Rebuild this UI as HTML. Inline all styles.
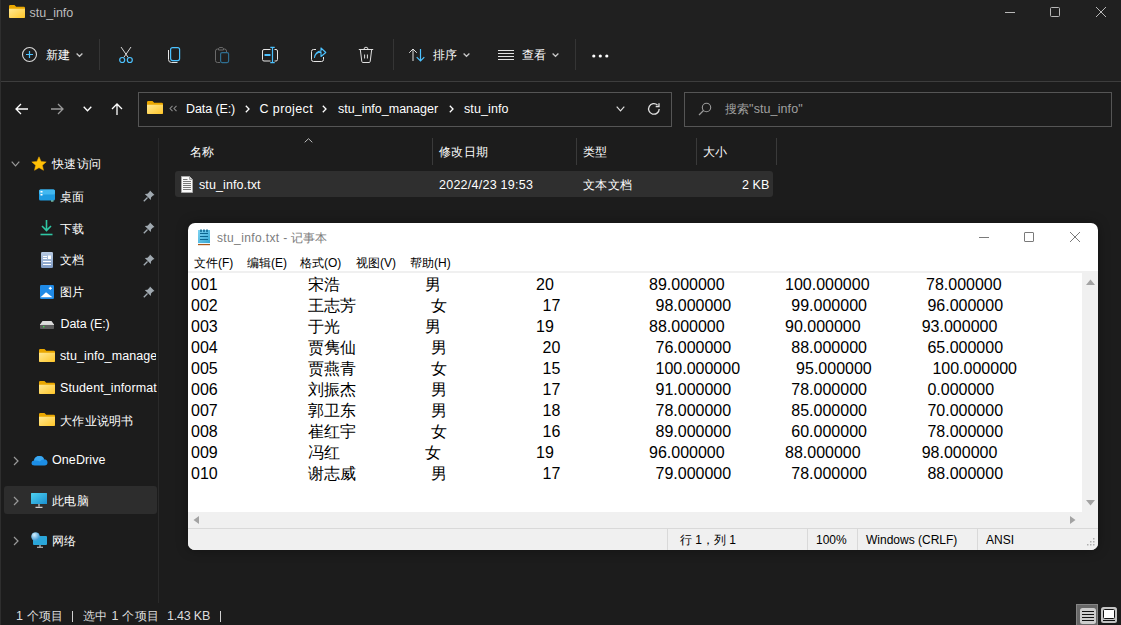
<!DOCTYPE html>
<html><head><meta charset="utf-8">
<style>
*{margin:0;padding:0;box-sizing:border-box}
html,body{width:1121px;height:625px;overflow:hidden;background:#1c1c1c;font-family:"Liberation Sans",sans-serif;color:#fff}
.a{position:absolute;white-space:nowrap}
svg{position:absolute;overflow:visible}
#top{position:absolute;left:0;top:0;width:1121px;height:81px;background:#202020}
#hline{position:absolute;left:0;top:81px;width:1121px;height:1px;background:#3d3d3d}
#lborder{position:absolute;left:0;top:0;width:1px;height:625px;background:#3a3a3a}
.t13{font-size:12.5px;line-height:16px;letter-spacing:0.1px}
.t14{font-size:12.5px;line-height:16px}
.cj{font-size:12px;line-height:16px;letter-spacing:0.3px}
#lb{position:absolute;left:0;top:0;width:1px;height:625px;background:#2e2e2e;z-index:5}
.vsep{position:absolute;width:1px;background:#3a3a3a}
.np{position:absolute;left:188px;top:223px;width:910px;height:327px;background:#fff;border-radius:7px;overflow:hidden;box-shadow:0 0 12px rgba(0,0,0,.35)}
.np .a{color:#000}
.tx{font-size:16px;line-height:21px}
.mn{font-size:12px;line-height:16px;color:#676767}
.st{font-size:12px;line-height:16px;color:#1a1a1a}
</style></head><body>
<div id="lb"></div>
<div id="top"></div>
<div id="hline"></div>

<!-- title -->
<svg style="left:9px;top:5px" width="16" height="13" viewBox="0 0 16 13"><defs><linearGradient id="fg" x1="0" y1="0" x2="1" y2="1"><stop offset="0" stop-color="#ffe892"/><stop offset="1" stop-color="#ffc629"/></linearGradient></defs><path d="M0 1.2Q0 0 1.2 0H5.5L7.2 1.8H14.8Q16 1.8 16 3V11.8Q16 13 14.8 13H1.2Q0 13 0 11.8Z" fill="#eaa700"/><path d="M0 3.8H16V11.8Q16 13 14.8 13H1.2Q0 13 0 11.8Z" fill="url(#fg)"/></svg>
<div class="a" style="left:29.5px;top:5px;font-size:12.5px;line-height:16px;color:#bdbdbd">stu_info</div>
<!-- window controls -->
<div class="a" style="left:1005px;top:12px;width:10px;height:1px;background:#b8b8b8"></div>
<div class="a" style="left:1050px;top:7px;width:10px;height:10px;border:1px solid #b8b8b8;border-radius:1.5px"></div>
<svg style="left:1096px;top:7px" width="10" height="10" viewBox="0 0 10 10"><path d="M0 0L10 10M10 0L0 10" stroke="#b8b8b8" stroke-width="1"/></svg>


<!-- toolbar -->
<svg style="left:22px;top:47px" width="16" height="16" viewBox="0 0 16 16"><circle cx="7.5" cy="7.5" r="7" fill="none" stroke="#d8d8d8" stroke-width="1.1"/><path d="M7.5 4V11M4 7.5H11" stroke="#4cc2ff" stroke-width="1.2"/></svg>
<div class="a cj" style="left:46px;top:47px;font-weight:500">新建</div>
<svg style="left:76px;top:53px" width="7" height="4" viewBox="0 0 7 4"><path d="M0.6 0.6L3.5 3.3L6.4 0.6" fill="none" stroke="#c8c8c8" stroke-width="1.3"/></svg>
<div class="vsep" style="left:99px;top:39px;height:31px;background:#353535"></div>
<!-- cut -->
<svg style="left:118px;top:46px" width="16" height="18" viewBox="0 0 16 18"><path d="M3 1L10.3 11.6M13 1L5.7 11.6" stroke="#d8d8d8" stroke-width="1"/><circle cx="4.2" cy="14" r="2.5" fill="none" stroke="#4cc2ff" stroke-width="1.2"/><circle cx="11.8" cy="14" r="2.5" fill="none" stroke="#4cc2ff" stroke-width="1.2"/></svg>
<!-- copy -->
<svg style="left:167px;top:46px" width="14" height="18" viewBox="0 0 14 18"><rect x="3.6" y="1.6" width="9" height="13" rx="2" fill="none" stroke="#4cc2ff" stroke-width="1.2"/><path d="M1.5 4V13.5Q1.5 16.5 4.5 16.5H10.5" fill="none" stroke="#e6e6e6" stroke-width="1"/></svg>
<!-- paste disabled -->
<svg style="left:214px;top:46px" width="16" height="18" viewBox="0 0 16 18"><path d="M6 16.5H3.5Q1.5 16.5 1.5 14.5V5Q1.5 3 3.5 3H4.5M9.5 3H10.5Q12.5 3 12.5 5V6" fill="none" stroke="#6a6a6a" stroke-width="1"/><path d="M4.5 4V2.5Q4.5 1.5 7 1.5Q9.5 1.5 9.5 2.5V4Z" fill="none" stroke="#6a6a6a" stroke-width="1"/><rect x="6.6" y="6.6" width="8" height="10" rx="1.5" fill="none" stroke="#2f6f92" stroke-width="1.2"/></svg>
<!-- rename -->
<svg style="left:261px;top:46px" width="18" height="18" viewBox="0 0 18 18"><path d="M9.5 3.5H3Q1.5 3.5 1.5 5V13.5Q1.5 15 3 15H9.5M13.5 3.5H15Q16.5 3.5 16.5 5V13.5Q16.5 15 15 15H13.5" fill="none" stroke="#e6e6e6" stroke-width="1"/><path d="M3.5 9H9.5" stroke="#4cc2ff" stroke-width="2"/><path d="M11.5 1.5V16.5M9.3 1.3H13.7M9.3 16.7H13.7" stroke="#4cc2ff" stroke-width="1.2"/></svg>
<!-- share -->
<svg style="left:310px;top:46px" width="17" height="18" viewBox="0 0 17 18"><path d="M6 3.5H3.5Q1.5 3.5 1.5 5.5V13.5Q1.5 15.5 3.5 15.5H11.5Q13.5 15.5 13.5 13.5V11" fill="none" stroke="#e6e6e6" stroke-width="1"/><path d="M4.5 11.5Q5.2 6.5 11 6.3V10.5L15.8 6.5L11 2V5Q5.5 5.3 4.5 11.5Z" fill="none" stroke="#4cc2ff" stroke-width="1.1" stroke-linejoin="round"/></svg>
<!-- delete -->
<svg style="left:358px;top:46px" width="16" height="18" viewBox="0 0 16 18"><path d="M0.8 3.5H15.2M6 3.3Q6 1.2 8 1.2Q10 1.2 10 3.3M2.3 3.5L3.8 15.5Q4 16.5 5 16.5H11Q12 16.5 12.2 15.5L13.7 3.5M6.6 8.5V12.5M9.4 8.5V12.5" fill="none" stroke="#e0e0e0" stroke-width="1"/></svg>
<div class="vsep" style="left:393px;top:39px;height:31px;background:#353535"></div>
<!-- sort -->
<svg style="left:408px;top:48px" width="18" height="14" viewBox="0 0 18 14"><path d="M5 13V1M1.2 4.8L5 1L8.8 4.8" fill="none" stroke="#e0e0e0" stroke-width="1"/><path d="M12.5 1V13M8.7 9.2L12.5 13L16.3 9.2" fill="none" stroke="#4cc2ff" stroke-width="1.2"/></svg>
<div class="a cj" style="left:433px;top:47px;font-weight:500">排序</div>
<svg style="left:463px;top:53px" width="7" height="4" viewBox="0 0 7 4"><path d="M0.6 0.6L3.5 3.3L6.4 0.6" fill="none" stroke="#c8c8c8" stroke-width="1.3"/></svg>
<!-- view -->
<svg style="left:498px;top:49px" width="16" height="12" viewBox="0 0 16 12"><path d="M0 1.5H16M0 4.5H16M0 7.5H16M0 10.5H16" stroke="#e0e0e0" stroke-width="1"/></svg>
<div class="a cj" style="left:522px;top:47px;font-weight:500">查看</div>
<svg style="left:552px;top:53px" width="7" height="4" viewBox="0 0 7 4"><path d="M0.6 0.6L3.5 3.3L6.4 0.6" fill="none" stroke="#c8c8c8" stroke-width="1.3"/></svg>
<div class="vsep" style="left:575px;top:39px;height:31px;background:#353535"></div>
<svg style="left:592px;top:54px" width="17" height="4" viewBox="0 0 17 4"><circle cx="1.8" cy="2" r="1.6" fill="#fff"/><circle cx="8.3" cy="2" r="1.6" fill="#fff"/><circle cx="14.8" cy="2" r="1.6" fill="#fff"/></svg>
<!-- nav -->
<svg style="left:15px;top:103px" width="14" height="12" viewBox="0 0 14 12"><path d="M13 6H1.2M6 1L1 6L6 11" fill="none" stroke="#fff" stroke-width="1.3"/></svg>
<svg style="left:50px;top:103px" width="14" height="12" viewBox="0 0 14 12"><path d="M1 6H12.8M8 1L13 6L8 11" fill="none" stroke="#9a9a9a" stroke-width="1.3"/></svg>
<svg style="left:83px;top:106px" width="9" height="6" viewBox="0 0 9 6"><path d="M0.7 0.7L4.5 4.8L8.3 0.7" fill="none" stroke="#fff" stroke-width="1.3"/></svg>
<svg style="left:111px;top:103px" width="12" height="12" viewBox="0 0 12 12"><path d="M6 12V1.2M1 6L6 1L11 6" fill="none" stroke="#fff" stroke-width="1.3"/></svg>
<div class="a" style="left:138px;top:92px;width:534px;height:35px;border:1px solid #555;background:#1c1c1c"></div>
<svg style="left:147px;top:101px" width="16" height="13" viewBox="0 0 16 13"><path d="M0 1.2Q0 0 1.2 0H5.5L7.2 1.8H14.8Q16 1.8 16 3V11.8Q16 13 14.8 13H1.2Q0 13 0 11.8Z" fill="#eaa700"/><path d="M0 3.8H16V11.8Q16 13 14.8 13H1.2Q0 13 0 11.8Z" fill="url(#fg)"/></svg>
<svg style="left:169px;top:105px" width="9" height="7" viewBox="0 0 9 7"><path d="M3.5 0.8L1 3.5L3.5 6.2M7.5 0.8L5 3.5L7.5 6.2" fill="none" stroke="#8a8a8a" stroke-width="1.1"/></svg>
<div class="a t14" style="left:186px;top:101px;letter-spacing:-0.1px">Data (E:)</div>
<svg style="left:245px;top:105px" width="5" height="8" viewBox="0 0 5 8"><path d="M0.8 0.8L4 4L0.8 7.2" fill="none" stroke="#fff" stroke-width="1.3"/></svg>
<div class="a t14" style="left:259.5px;top:101px;letter-spacing:0.4px">C project</div>
<svg style="left:322px;top:105px" width="5" height="8" viewBox="0 0 5 8"><path d="M0.8 0.8L4 4L0.8 7.2" fill="none" stroke="#fff" stroke-width="1.3"/></svg>
<div class="a t14" style="left:338px;top:101px;letter-spacing:0px">stu_info_manager</div>
<svg style="left:449px;top:105px" width="5" height="8" viewBox="0 0 5 8"><path d="M0.8 0.8L4 4L0.8 7.2" fill="none" stroke="#fff" stroke-width="1.3"/></svg>
<div class="a t14" style="left:464px;top:101px;letter-spacing:0.1px">stu_info</div>
<svg style="left:616px;top:106px" width="9" height="6" viewBox="0 0 9 6"><path d="M0.7 0.7L4.5 4.8L8.3 0.7" fill="none" stroke="#e0e0e0" stroke-width="1.2"/></svg>
<svg style="left:647px;top:102px" width="14" height="14" viewBox="0 0 14 14"><path d="M12.2 7A5.3 5.3 0 1 1 10.5 3" fill="none" stroke="#e0e0e0" stroke-width="1.3"/><path d="M12 1.2V4.5H8.7" fill="none" stroke="#e0e0e0" stroke-width="1.3"/></svg>
<div class="a" style="left:684px;top:92px;width:428px;height:35px;border:1px solid #555;background:#1c1c1c"></div>
<svg style="left:698px;top:102px" width="14" height="14" viewBox="0 0 14 14"><circle cx="8.5" cy="5.5" r="4.2" fill="none" stroke="#9a9a9a" stroke-width="1.1"/><path d="M5.5 8.5L1 13" stroke="#9a9a9a" stroke-width="1.3"/></svg>
<div class="a t13" style="left:724.5px;top:101px;color:#a0a0a0"><span class="cj">搜索</span>"stu_info"</div>

<!-- left pane -->
<div class="vsep" style="left:158px;top:138px;height:465px;background:#2a2a2a"></div>
<svg style="left:11px;top:161px" width="9" height="6" viewBox="0 0 9 6"><path d="M0.7 0.7L4.5 4.8L8.3 0.7" fill="none" stroke="#9a9a9a" stroke-width="1.2"/></svg>
<svg style="left:31px;top:156px" width="16" height="16" viewBox="0 0 16 16"><path d="M8 0.8L10.1 5.4L15.2 5.9L11.4 9.3L12.5 14.3L8 11.7L3.5 14.3L4.6 9.3L0.8 5.9L5.9 5.4Z" fill="#ffc107" stroke="#f0a800" stroke-width="0.5"/></svg>
<div class="a cj" style="left:52px;top:156px">快速访问</div>
<svg style="left:39px;top:189px" width="16" height="13" viewBox="0 0 16 13"><rect x="0" y="0.5" width="16" height="11" rx="1.5" fill="#1e9be0"/><rect x="0" y="0.5" width="16" height="5" rx="1.5" fill="#42b8f0"/><rect x="1.5" y="2" width="2" height="1.5" fill="#fff"/><rect x="1.5" y="5" width="2" height="1.5" fill="#fff"/><rect x="12" y="11.5" width="2.5" height="1" fill="#9fd"/></svg>
<div class="a cj" style="left:60px;top:189px">桌面</div>
<svg style="left:143px;top:190px" width="12" height="12" viewBox="0 0 12 12"><path d="M7 0.5L11.5 5L10 5.5L8 7.5L7.8 10L1.8 4L4.5 3.8L6.5 1.8Z" fill="#a0a9b0"/><path d="M4.5 7.5L0.8 11.2" stroke="#a0a9b0" stroke-width="1.3"/></svg>
<svg style="left:40px;top:219px" width="13" height="17" viewBox="0 0 13 17"><path d="M6.5 1V11.5M2 7L6.5 11.5L11 7" fill="none" stroke="#2fc7a4" stroke-width="1.6"/><path d="M0.5 15.5H12.5" stroke="#2fc7a4" stroke-width="1.6"/></svg>
<div class="a cj" style="left:60px;top:221px">下载</div>
<svg style="left:143px;top:222px" width="12" height="12" viewBox="0 0 12 12"><path d="M7 0.5L11.5 5L10 5.5L8 7.5L7.8 10L1.8 4L4.5 3.8L6.5 1.8Z" fill="#a0a9b0"/><path d="M4.5 7.5L0.8 11.2" stroke="#a0a9b0" stroke-width="1.3"/></svg>
<svg style="left:41px;top:252px" width="12" height="16" viewBox="0 0 12 16"><defs><linearGradient id="dg" x1="0" y1="0" x2="0" y2="1"><stop offset="0" stop-color="#b9cbe3"/><stop offset="1" stop-color="#7f9bc4"/></linearGradient></defs><rect x="0" y="0" width="12" height="16" rx="1.2" fill="url(#dg)"/><path d="M2 4.5H6M2 6.5H6M2 9.5H10M2 12.5H10" stroke="#fff" stroke-width="1"/><rect x="7" y="3.5" width="3" height="3.5" fill="#fff"/></svg>
<div class="a cj" style="left:60px;top:252px">文档</div>
<svg style="left:143px;top:254px" width="12" height="12" viewBox="0 0 12 12"><path d="M7 0.5L11.5 5L10 5.5L8 7.5L7.8 10L1.8 4L4.5 3.8L6.5 1.8Z" fill="#a0a9b0"/><path d="M4.5 7.5L0.8 11.2" stroke="#a0a9b0" stroke-width="1.3"/></svg>
<svg style="left:40px;top:285px" width="14" height="14" viewBox="0 0 14 14"><rect x="0" y="0" width="14" height="14" rx="1.2" fill="#1f8ae6"/><path d="M0.5 12.3L6 7.3L12.5 12.3Z" fill="#fff"/><path d="M10.3 1.8V4.8M8.8 3.3H11.8" stroke="#fff" stroke-width="1.2"/></svg>
<div class="a cj" style="left:60px;top:284px">图片</div>
<svg style="left:143px;top:286px" width="12" height="12" viewBox="0 0 12 12"><path d="M7 0.5L11.5 5L10 5.5L8 7.5L7.8 10L1.8 4L4.5 3.8L6.5 1.8Z" fill="#a0a9b0"/><path d="M4.5 7.5L0.8 11.2" stroke="#a0a9b0" stroke-width="1.3"/></svg>
<svg style="left:40px;top:321px" width="14" height="8" viewBox="0 0 14 8"><path d="M2.5 0H11.5L14 3.5H0Z" fill="#dcdcdc"/><rect x="0" y="3.5" width="14" height="4.5" rx="0.8" fill="#5d5d5d"/><path d="M0 3.5H14" stroke="#f0f0f0" stroke-width="0.8"/><rect x="3" y="5" width="1.4" height="1.4" fill="#3ee04a"/></svg>
<div class="a t13" style="left:60.5px;top:316px;letter-spacing:-0.1px">Data (E:)</div>
<svg style="left:39px;top:349px" width="16" height="13" viewBox="0 0 16 13"><path d="M0 1.2Q0 0 1.2 0H5.5L7.2 1.8H14.8Q16 1.8 16 3V11.8Q16 13 14.8 13H1.2Q0 13 0 11.8Z" fill="#eaa700"/><path d="M0 3.8H16V11.8Q16 13 14.8 13H1.2Q0 13 0 11.8Z" fill="url(#fg)"/></svg><div class="a t13" style="left:60px;top:348px;width:96px;overflow:hidden">stu_info_manager</div>
<svg style="left:39px;top:381px" width="16" height="13" viewBox="0 0 16 13"><path d="M0 1.2Q0 0 1.2 0H5.5L7.2 1.8H14.8Q16 1.8 16 3V11.8Q16 13 14.8 13H1.2Q0 13 0 11.8Z" fill="#eaa700"/><path d="M0 3.8H16V11.8Q16 13 14.8 13H1.2Q0 13 0 11.8Z" fill="url(#fg)"/></svg><div class="a t13" style="left:60px;top:380px;width:97px;overflow:hidden">Student_information</div>
<svg style="left:39px;top:413px" width="16" height="13" viewBox="0 0 16 13"><path d="M0 1.2Q0 0 1.2 0H5.5L7.2 1.8H14.8Q16 1.8 16 3V11.8Q16 13 14.8 13H1.2Q0 13 0 11.8Z" fill="#eaa700"/><path d="M0 3.8H16V11.8Q16 13 14.8 13H1.2Q0 13 0 11.8Z" fill="url(#fg)"/></svg><div class="a cj" style="left:60px;top:413px">大作业说明书</div>
<svg style="left:13px;top:456px" width="6" height="10" viewBox="0 0 6 10"><path d="M1 1L5 5L1 9" fill="none" stroke="#9a9a9a" stroke-width="1.2"/></svg>
<svg style="left:31px;top:455px" width="17" height="11" viewBox="0 0 17 11"><path d="M3.5 10.5Q0.5 10.5 0.5 8Q0.5 5.7 3 5.5Q3.8 1 8.5 1Q12 1 13 4.2Q16.5 4.5 16.5 7.5Q16.5 10.5 13.5 10.5Z" fill="#1c8ee6"/><path d="M3 5.5Q3.8 1 8.5 1Q12 1 13 4.2Q10 4.5 9 6.5Q6 5 3 5.5Z" fill="#3aa8f2"/></svg>
<div class="a t13" style="left:52px;top:452px">OneDrive</div>
<div class="a" style="left:4px;top:486px;width:153px;height:28px;background:#2d2d2d;border-radius:3px"></div>
<svg style="left:13px;top:496px" width="6" height="10" viewBox="0 0 6 10"><path d="M1 1L5 5L1 9" fill="none" stroke="#9a9a9a" stroke-width="1.2"/></svg>
<svg style="left:31px;top:493px" width="16" height="15" viewBox="0 0 16 15"><rect x="0" y="0" width="16" height="11" rx="1" fill="#2bb7e4"/><rect x="0" y="0" width="16" height="11" rx="1" fill="url(#pg)"/><defs><linearGradient id="pg" x1="0" y1="0" x2="1" y2="1"><stop offset="0" stop-color="#4fd2f0"/><stop offset="1" stop-color="#1a8fd0"/></linearGradient></defs><path d="M8 11V13.5M4.5 14.3H11.5" stroke="#cfcfcf" stroke-width="1.2"/></svg>
<div class="a cj" style="left:52px;top:493px">此电脑</div>
<svg style="left:13px;top:536px" width="6" height="10" viewBox="0 0 6 10"><path d="M1 1L5 5L1 9" fill="none" stroke="#9a9a9a" stroke-width="1.2"/></svg>
<svg style="left:31px;top:532px" width="16" height="16" viewBox="0 0 16 16"><rect x="2" y="4" width="14" height="9" rx="1" fill="#2aa6d9"/><path d="M9 13V15M6 15.3H12" stroke="#cfcfcf" stroke-width="1.1"/><circle cx="4.5" cy="4.5" r="4" fill="#5dbbe8"/><circle cx="4.5" cy="4.5" r="4" fill="url(#gg)"/><defs><radialGradient id="gg" cx="0.35" cy="0.3" r="0.8"><stop offset="0" stop-color="#d6f1ff"/><stop offset="1" stop-color="#2b8fd0"/></radialGradient></defs></svg>
<div class="a cj" style="left:52px;top:533px">网络</div>

<!-- content header -->
<svg style="left:304px;top:138px" width="9" height="5" viewBox="0 0 9 5"><path d="M0.7 4.3L4.5 0.7L8.3 4.3" fill="none" stroke="#bdbdbd" stroke-width="1"/></svg>
<div class="a cj" style="left:190px;top:144px">名称</div>
<div class="vsep" style="left:432px;top:138px;height:27px;background:#3a3a3a"></div>
<div class="a cj" style="left:439px;top:144px">修改日期</div>
<div class="vsep" style="left:576px;top:138px;height:27px;background:#3a3a3a"></div>
<div class="a cj" style="left:583px;top:144px">类型</div>
<div class="vsep" style="left:696px;top:138px;height:27px;background:#3a3a3a"></div>
<div class="a cj" style="left:703px;top:144px">大小</div>
<div class="vsep" style="left:776px;top:138px;height:27px;background:#3a3a3a"></div>
<div class="a" style="left:175px;top:171px;width:598px;height:26px;background:#2f2f2f;border-radius:3px"></div>
<svg style="left:181px;top:176px" width="12" height="17" viewBox="0 0 12 17"><path d="M0.5 0.5H8.3L11.5 3.7V16.5H0.5Z" fill="#fafafa" stroke="#a8a8a8" stroke-width="1"/><path d="M8.5 0.5V3.5H11.5" fill="#d8d8d8" stroke="#a8a8a8" stroke-width="1"/><path d="M2 3.5H6.5M2 5.5H10M2 7.5H10M2 9.5H10M2 11.5H10M2 13.5H10" stroke="#7a7a7a" stroke-width="1"/></svg>
<div class="a t13" style="left:199px;top:177px">stu_info.txt</div>
<div class="a t13" style="left:439px;top:177px;letter-spacing:0.25px">2022/4/23 19:53</div>
<div class="a cj" style="left:583px;top:177px">文本文档</div>
<div class="a t13" style="left:742px;top:177px">2 KB</div>
<!-- status -->
<div class="a t13" style="left:16px;top:608px;color:#dcdcdc">1 <span class="cj">个项目</span></div>
<div class="a" style="left:72px;top:611px;width:1px;height:11px;background:#cfcfcf"></div>
<div class="a t13" style="left:83px;top:608px;color:#dcdcdc;letter-spacing:0.3px"><span class="cj">选中</span> 1 <span class="cj">个项目</span></div>
<div class="a t13" style="left:167px;top:608px;color:#dcdcdc;letter-spacing:-0.2px">1.43 KB</div>
<div class="a" style="left:220px;top:611px;width:1px;height:11px;background:#cfcfcf"></div>
<div class="a" style="left:1076px;top:604px;width:22px;height:22px;background:#676767;border:1px solid #858585"></div>
<svg style="left:1080px;top:608px" width="16" height="16" viewBox="0 0 16 16"><rect x="0" y="0" width="16" height="16" rx="2.5" fill="#cdcdcd"/><path d="M2 3.5H14M2 6.5H14M2 9.5H14M2 12.5H14" stroke="#111" stroke-width="1"/></svg>
<svg style="left:1101px;top:607px" width="16" height="16" viewBox="0 0 16 16"><rect x="0" y="0" width="16" height="16" rx="2.5" fill="#c4c4c4"/><rect x="2.5" y="2.5" width="11" height="9" rx="1" fill="#fff" stroke="#111" stroke-width="1"/><path d="M2 13.5H14" stroke="#111" stroke-width="1"/></svg>
<!-- notepad -->
<div class="np">
<svg style="left:10px;top:6px" width="13" height="17" viewBox="0 0 13 17"><defs><linearGradient id="ng" x1="0" y1="0" x2="1" y2="1"><stop offset="0" stop-color="#7fd3f2"/><stop offset="1" stop-color="#35a7d3"/></linearGradient></defs><rect x="0" y="1" width="12" height="13" fill="url(#ng)"/><path d="M2 4.5H10M2 7.5H10M2 10.5H10" stroke="#0b6690" stroke-width="1.2"/><path d="M3 1V2.5M6 1V2.5M9 1V2.5" stroke="#0b6690" stroke-width="1.6" stroke-linecap="round"/><rect x="0" y="14" width="12" height="1" fill="#e8f6fc"/><rect x="0" y="15" width="12" height="1.2" fill="#a8581c"/></svg>
<div class="a" style="left:29px;top:7px;font-size:12px;line-height:16px;color:#7c7c7c"><span style="letter-spacing:0.37px">stu_info.txt - </span>记事本</div>
<div class="a" style="left:791px;top:14px;width:10px;height:1px;background:#7a7a7a"></div>
<div class="a" style="left:836px;top:9px;width:10px;height:10px;border:1px solid #7a7a7a;border-radius:1px"></div>
<svg style="left:882px;top:9px" width="10" height="10" viewBox="0 0 10 10"><path d="M0 0L10 10M10 0L0 10" stroke="#7a7a7a" stroke-width="1"/></svg>
<div class="a mn" style="left:6px;top:32px">文件(F)</div>
<div class="a mn" style="left:59px;top:32px">编辑(E)</div>
<div class="a mn" style="left:112px;top:32px">格式(O)</div>
<div class="a mn" style="left:168px;top:32px">视图(V)</div>
<div class="a mn" style="left:222px;top:32px">帮助(H)</div>
<div class="a" style="left:0;top:48px;width:910px;height:2px;background:#f0f0f0"></div>
<div class="a tx" style="left:3.0px;top:51px">001</div>
<div class="a tx" style="left:120.0px;top:51px">宋浩</div>
<div class="a tx" style="left:237.0px;top:51px">男</div>
<div class="a tx" style="left:348.0px;top:51px">20</div>
<div class="a tx" style="left:461.0px;top:51px">89.000000</div>
<div class="a tx" style="left:597.0px;top:51px">100.000000</div>
<div class="a tx" style="left:738.0px;top:51px">78.000000</div>
<div class="a tx" style="left:3.0px;top:72px">002</div>
<div class="a tx" style="left:120.0px;top:72px">王志芳</div>
<div class="a tx" style="left:243.0px;top:72px">女</div>
<div class="a tx" style="left:354.5px;top:72px">17</div>
<div class="a tx" style="left:467.5px;top:72px">98.000000</div>
<div class="a tx" style="left:603.3px;top:72px">99.000000</div>
<div class="a tx" style="left:739.4px;top:72px">96.000000</div>
<div class="a tx" style="left:3.0px;top:93px">003</div>
<div class="a tx" style="left:120.0px;top:93px">于光</div>
<div class="a tx" style="left:237.0px;top:93px">男</div>
<div class="a tx" style="left:348.0px;top:93px">19</div>
<div class="a tx" style="left:461.0px;top:93px">88.000000</div>
<div class="a tx" style="left:597.0px;top:93px">90.000000</div>
<div class="a tx" style="left:733.7px;top:93px">93.000000</div>
<div class="a tx" style="left:3.0px;top:114px">004</div>
<div class="a tx" style="left:120.0px;top:114px">贾隽仙</div>
<div class="a tx" style="left:243.0px;top:114px">男</div>
<div class="a tx" style="left:354.5px;top:114px">20</div>
<div class="a tx" style="left:467.5px;top:114px">76.000000</div>
<div class="a tx" style="left:603.3px;top:114px">88.000000</div>
<div class="a tx" style="left:739.4px;top:114px">65.000000</div>
<div class="a tx" style="left:3.0px;top:135px">005</div>
<div class="a tx" style="left:120.0px;top:135px">贾燕青</div>
<div class="a tx" style="left:243.0px;top:135px">女</div>
<div class="a tx" style="left:354.5px;top:135px">15</div>
<div class="a tx" style="left:467.5px;top:135px">100.000000</div>
<div class="a tx" style="left:608.1px;top:135px">95.000000</div>
<div class="a tx" style="left:744.4px;top:135px">100.000000</div>
<div class="a tx" style="left:3.0px;top:156px">006</div>
<div class="a tx" style="left:120.0px;top:156px">刘振杰</div>
<div class="a tx" style="left:243.0px;top:156px">男</div>
<div class="a tx" style="left:354.5px;top:156px">17</div>
<div class="a tx" style="left:467.5px;top:156px">91.000000</div>
<div class="a tx" style="left:603.3px;top:156px">78.000000</div>
<div class="a tx" style="left:739.4px;top:156px">0.000000</div>
<div class="a tx" style="left:3.0px;top:177px">007</div>
<div class="a tx" style="left:120.0px;top:177px">郭卫东</div>
<div class="a tx" style="left:243.0px;top:177px">男</div>
<div class="a tx" style="left:354.5px;top:177px">18</div>
<div class="a tx" style="left:467.5px;top:177px">78.000000</div>
<div class="a tx" style="left:603.3px;top:177px">85.000000</div>
<div class="a tx" style="left:739.4px;top:177px">70.000000</div>
<div class="a tx" style="left:3.0px;top:198px">008</div>
<div class="a tx" style="left:120.0px;top:198px">崔红宇</div>
<div class="a tx" style="left:243.0px;top:198px">女</div>
<div class="a tx" style="left:354.5px;top:198px">16</div>
<div class="a tx" style="left:467.5px;top:198px">89.000000</div>
<div class="a tx" style="left:603.3px;top:198px">60.000000</div>
<div class="a tx" style="left:739.4px;top:198px">78.000000</div>
<div class="a tx" style="left:3.0px;top:219px">009</div>
<div class="a tx" style="left:120.0px;top:219px">冯红</div>
<div class="a tx" style="left:237.0px;top:219px">女</div>
<div class="a tx" style="left:348.0px;top:219px">19</div>
<div class="a tx" style="left:461.0px;top:219px">96.000000</div>
<div class="a tx" style="left:597.0px;top:219px">88.000000</div>
<div class="a tx" style="left:733.7px;top:219px">98.000000</div>
<div class="a tx" style="left:3.0px;top:240px">010</div>
<div class="a tx" style="left:120.0px;top:240px">谢志威</div>
<div class="a tx" style="left:243.0px;top:240px">男</div>
<div class="a tx" style="left:354.5px;top:240px">17</div>
<div class="a tx" style="left:467.5px;top:240px">79.000000</div>
<div class="a tx" style="left:603.3px;top:240px">78.000000</div>
<div class="a tx" style="left:739.4px;top:240px">88.000000</div>
<div class="a" style="left:894px;top:50px;width:16px;height:239px;background:#f0f0f0"></div>
<svg style="left:898px;top:56px" width="9" height="6" viewBox="0 0 9 6"><path d="M0 6L4.5 0.5L9 6Z" fill="#a3a3a3"/></svg>
<svg style="left:898px;top:277px" width="9" height="6" viewBox="0 0 9 6"><path d="M0 0L4.5 5.5L9 0Z" fill="#a3a3a3"/></svg>
<div class="a" style="left:0;top:289px;width:910px;height:16px;background:#f0f0f0"></div>
<svg style="left:5px;top:293px" width="6" height="8" viewBox="0 0 6 8"><path d="M6 0L0.5 4L6 8Z" fill="#a3a3a3"/></svg>
<svg style="left:882px;top:293px" width="6" height="8" viewBox="0 0 6 8"><path d="M0 0L5.5 4L0 8Z" fill="#a3a3a3"/></svg>
<div class="a" style="left:0;top:305px;width:910px;height:1px;background:#d9d9d9"></div>
<div class="a" style="left:0;top:306px;width:910px;height:21px;background:#f0f0f0"></div>
<div class="a" style="left:479px;top:306px;width:1px;height:21px;background:#d9d9d9"></div>
<div class="a" style="left:619px;top:306px;width:1px;height:21px;background:#d9d9d9"></div>
<div class="a" style="left:669px;top:306px;width:1px;height:21px;background:#d9d9d9"></div>
<div class="a" style="left:789px;top:306px;width:1px;height:21px;background:#d9d9d9"></div>
<div class="a st" style="left:492px;top:309px">行 1，列 1</div>
<div class="a st" style="left:628px;top:309px">100%</div>
<div class="a st" style="left:678px;top:309px">Windows (CRLF)</div>
<div class="a st" style="left:798px;top:309px">ANSI</div>
<svg style="left:898px;top:314px" width="10" height="10" viewBox="0 0 10 10"><g fill="#b0b0b0"><rect x="7" y="1" width="1.5" height="1.5"/><rect x="4" y="4" width="1.5" height="1.5"/><rect x="7" y="4" width="1.5" height="1.5"/><rect x="1" y="7" width="1.5" height="1.5"/><rect x="4" y="7" width="1.5" height="1.5"/><rect x="7" y="7" width="1.5" height="1.5"/></g></svg>
</div>
</body></html>
